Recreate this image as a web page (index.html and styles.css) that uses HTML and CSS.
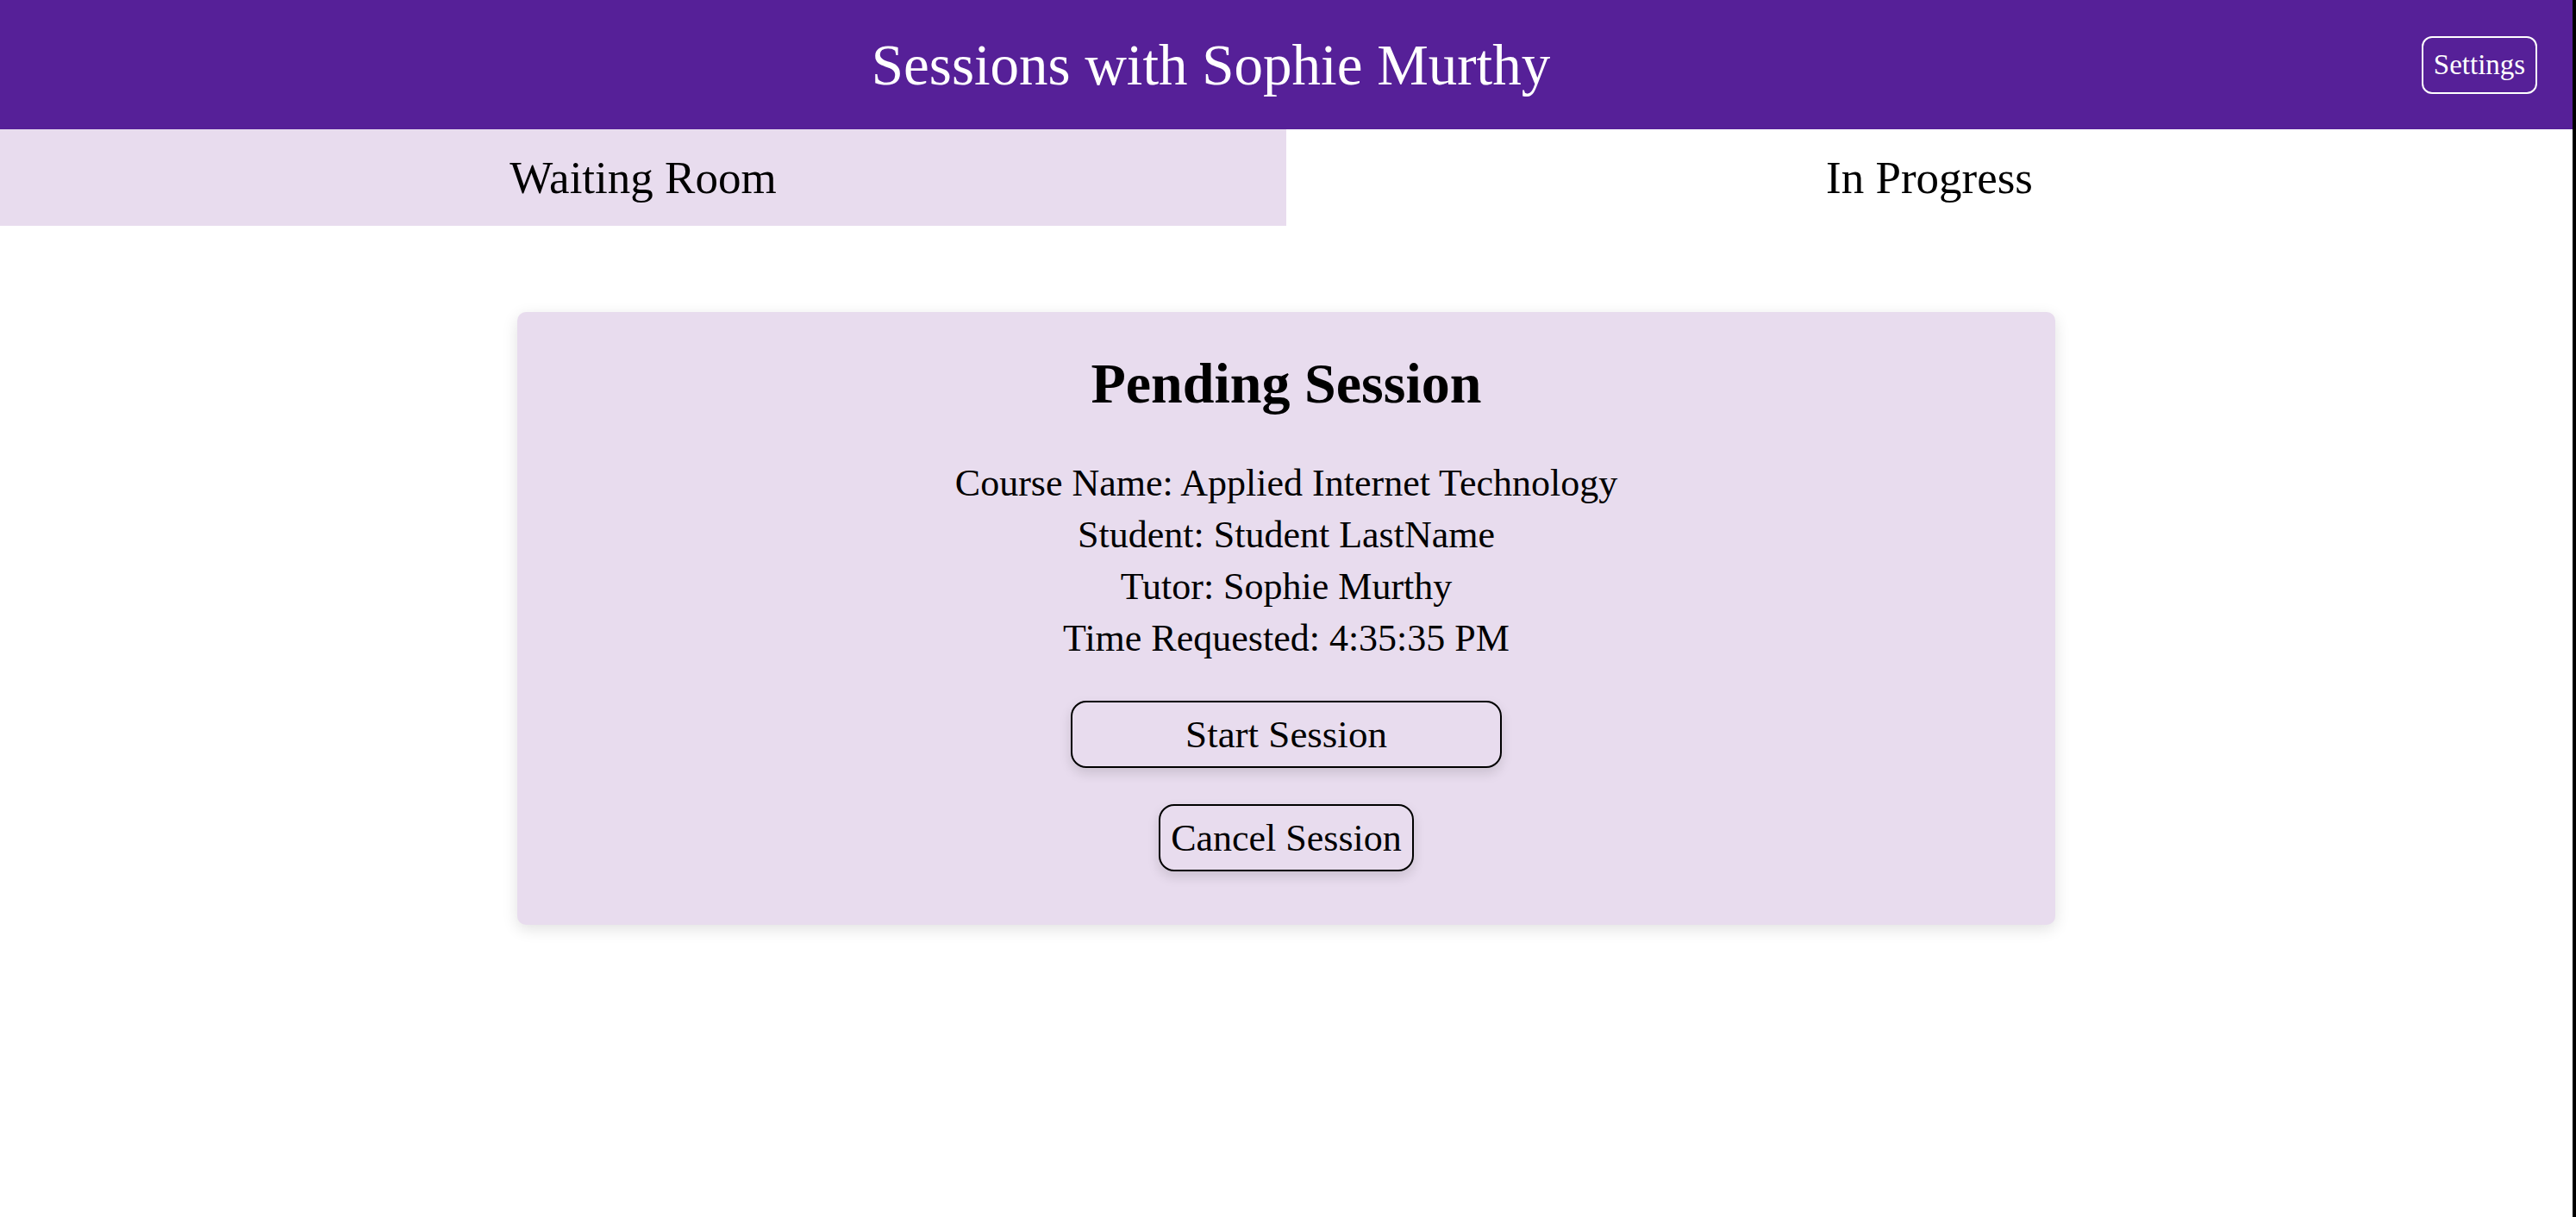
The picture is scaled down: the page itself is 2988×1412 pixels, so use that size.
FILE: index.html
```html
<!DOCTYPE html>
<html lang="en">
<head>
<meta charset="utf-8">
<title>Sessions with Sophie Murthy</title>
<link rel="stylesheet" href="styles.css">
</head>
<body>
<div class="page">
  <header class="topbar">
    <h1 class="title">Sessions with Sophie Murthy</h1>
    <button class="settings">Settings</button>
  </header>
  <nav class="tabs">
    <div class="tab tab-active">Waiting Room</div>
    <div class="tab">In Progress</div>
  </nav>
  <main class="content">
    <section class="card">
      <h2 class="card-title">Pending Session</h2>
      <div class="info">
        <p>Course Name: Applied Internet Technology</p>
        <p>Student: Student LastName</p>
        <p>Tutor: Sophie Murthy</p>
        <p>Time Requested: 4:35:35 PM</p>
      </div>
      <div class="actions">
        <button class="btn btn-start">Start Session</button>
        <button class="btn">Cancel Session</button>
      </div>
    </section>
  </main>
</div>
</body>
</html>
```
FILE: styles.css
```css
html, body {
  margin: 0;
  padding: 0;
  background: #000;
}
.page {
  box-sizing: border-box;
  width: calc(100% - 4px);
  min-height: 100vh;
  background: #fff;
  font-family: "Liberation Serif", "Times New Roman", serif;
  color: #000;
}
.topbar {
  height: 150px;
  background: #562098;
  display: flex;
  align-items: center;
  padding-right: 41px;
}
.title {
  flex: 1;
  margin: 0;
  text-align: center;
  font-weight: normal;
  font-size: 67px;
  line-height: 80px;
  color: #fff;
}
.settings {
  box-sizing: border-box;
  width: 134px;
  height: 67px;
  padding: 0;
  background: transparent;
  border: 2px solid #fff;
  border-radius: 12px;
  color: #fff;
  font-family: inherit;
  font-size: 33px;
}
.tabs {
  display: grid;
  grid-template-columns: 1fr 1fr;
  height: 112px;
}
.tab {
  display: flex;
  align-items: center;
  justify-content: center;
  font-size: 53px;
  background: #fff;
}
.tab-active {
  background: #e8dcee;
}
.content {
  display: flex;
  justify-content: center;
  padding-top: 100px;
}
.card {
  box-sizing: border-box;
  width: 1784px;
  background: #e8dcee;
  border-radius: 10px;
  box-shadow: 0 5px 18px rgba(0, 0, 0, 0.12);
  padding: 43px 0 62px;
  display: flex;
  flex-direction: column;
  align-items: center;
  text-align: center;
}
.card-title {
  margin: 0;
  font-size: 66px;
  line-height: 80px;
  font-weight: bold;
}
.info {
  margin-top: 46px;
}
.info p {
  margin: 0;
  font-size: 44px;
  line-height: 60px;
}
.actions {
  margin-top: 42px;
  display: flex;
  flex-direction: column;
  align-items: center;
  gap: 42px;
}
.btn {
  box-sizing: border-box;
  height: 78px;
  padding: 0 12px;
  background: #e8dcee;
  border: 2px solid #000;
  border-radius: 18px;
  font-family: inherit;
  font-size: 44px;
  color: #000;
  box-shadow: 0 6px 14px rgba(0, 0, 0, 0.13);
}
.btn-start {
  width: 500px;
  font-size: 45px;
}
```
